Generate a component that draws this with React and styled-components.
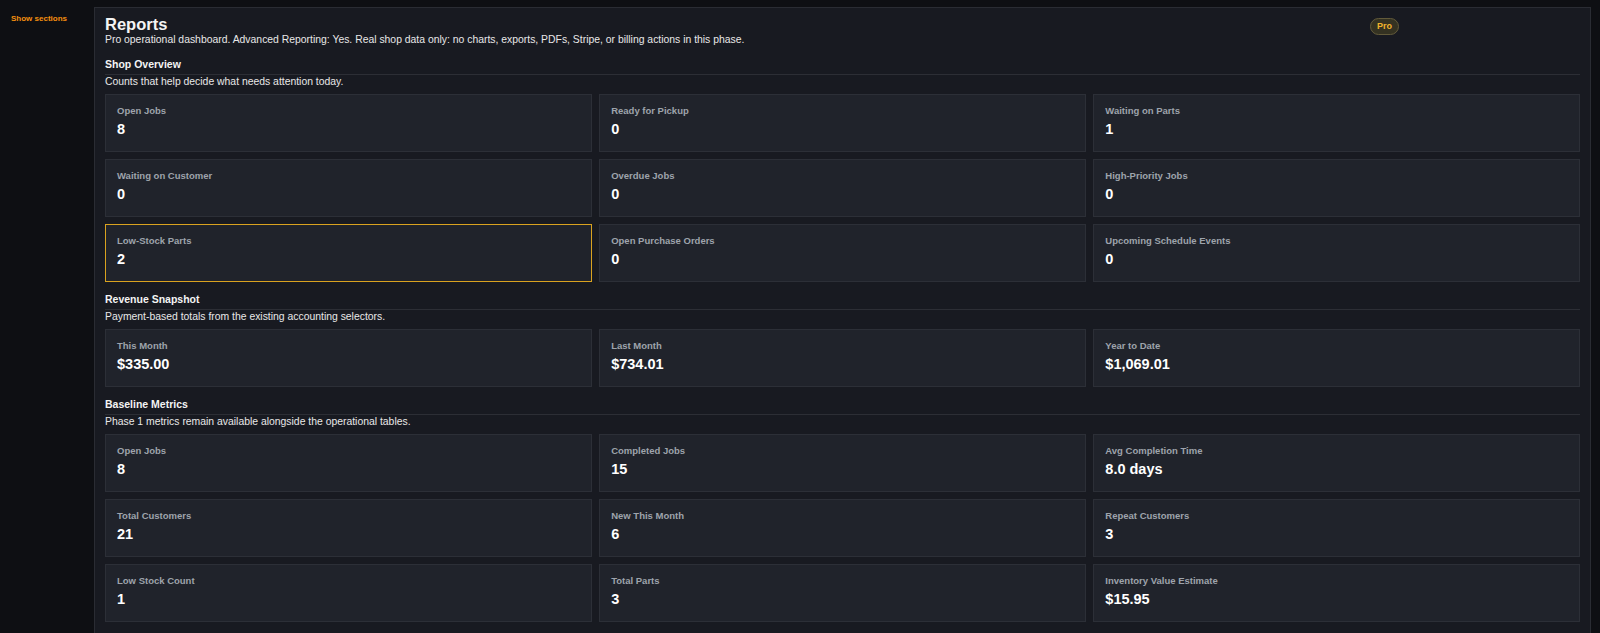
import React from "react";
import styled, { createGlobalStyle } from "styled-components";

const Global = createGlobalStyle`
  html, body { margin: 0; padding: 0; background: #0e0f13; }
  body { font-family: "Liberation Sans", Arial, sans-serif; color: #e6e6e6; }
  * { box-sizing: border-box; }
`;

const Shell = styled.div`
  display: flex;
  align-items: flex-start;
  min-height: 633px;
  padding: 7px 9px 0 0;
`;

const Sidebar = styled.aside`
  width: 94px;
  flex: none;
  padding: 0 0 0 11px;
`;

const SidebarToggle = styled.button`
  background: none;
  border: none;
  padding: 0;
  font: bold 8px/11px "Liberation Sans", Arial, sans-serif;
  color: #f5900f;
  cursor: pointer;
`;

const Panel = styled.main`
  flex: 1;
  background: #181a21;
  border: 1px solid #2a2c33;
  border-bottom: none;
  padding: 8px 10px 20px;
  min-height: 640px;
`;

const Header = styled.header`
  display: flex;
  justify-content: space-between;
  align-items: flex-start;
  max-width: 1294px;
`;

const Title = styled.h1`
  margin: 0;
  font: bold 16.5px/17px "Liberation Sans", Arial, sans-serif;
  color: #f4f4f4;
`;

const Subtitle = styled.p`
  margin: 0 0 2px;
  font: 10.4px/13px "Liberation Sans", Arial, sans-serif;
  color: #e8e8e8;
`;

const Badge = styled.span`
  margin-top: 2px;
  display: inline-flex;
  align-items: center;
  justify-content: center;
  height: 17px;
  padding: 0 6px;
  border-radius: 9px;
  background: #343222;
  border: 1px solid #625a3a;
  color: #f0b52c;
  font: bold 9px/1 "Liberation Sans", Arial, sans-serif;
`;

const Section = styled.section`
  margin-top: ${(p) => p.$top}px;
`;

const SectionTitle = styled.h2`
  margin: 0;
  padding-bottom: 3px;
  border-bottom: 1px solid #2c2e35;
  font: bold 10.5px/14px "Liberation Sans", Arial, sans-serif;
  color: #f4f4f4;
`;

const SectionDesc = styled.p`
  margin: 0 0 6px;
  font: 10.4px/13px "Liberation Sans", Arial, sans-serif;
  color: #e8e8e8;
`;

const Grid = styled.div`
  display: grid;
  grid-template-columns: repeat(3, 1fr);
  gap: 7px 7.5px;
`;

const Card = styled.div`
  background: #20232b;
  border: 1px solid ${(p) => (p.$alert ? "#d9a21f" : "#2c2f37")};
  padding: 10px 11px 8px;
  height: 58px;
`;

const Label = styled.div`
  font: bold 9.5px/12px "Liberation Sans", Arial, sans-serif;
  color: #9ea3ac;
`;

const Value = styled.div`
  margin-top: 3px;
  font: bold 14.5px/19px "Liberation Sans", Arial, sans-serif;
  color: #ffffff;
`;

const sections = [
  {
    title: "Shop Overview",
    desc: "Counts that help decide what needs attention today.",
    top: 9,
    items: [
      ["Open Jobs", "8"],
      ["Ready for Pickup", "0"],
      ["Waiting on Parts", "1"],
      ["Waiting on Customer", "0"],
      ["Overdue Jobs", "0"],
      ["High-Priority Jobs", "0"],
      ["Low-Stock Parts", "2", true],
      ["Open Purchase Orders", "0"],
      ["Upcoming Schedule Events", "0"],
    ],
  },
  {
    title: "Revenue Snapshot",
    desc: "Payment-based totals from the existing accounting selectors.",
    top: 10,
    items: [
      ["This Month", "$335.00"],
      ["Last Month", "$734.01"],
      ["Year to Date", "$1,069.01"],
    ],
  },
  {
    title: "Baseline Metrics",
    desc: "Phase 1 metrics remain available alongside the operational tables.",
    top: 10,
    items: [
      ["Open Jobs", "8"],
      ["Completed Jobs", "15"],
      ["Avg Completion Time", "8.0 days"],
      ["Total Customers", "21"],
      ["New This Month", "6"],
      ["Repeat Customers", "3"],
      ["Low Stock Count", "1"],
      ["Total Parts", "3"],
      ["Inventory Value Estimate", "$15.95"],
    ],
  },
];

export default function App() {
  return (
    <>
      <Global />
      <Shell>
        <Sidebar>
          <SidebarToggle>Show sections</SidebarToggle>
        </Sidebar>
        <Panel>
          <Header>
            <div>
              <Title>Reports</Title>
              <Subtitle>
                Pro operational dashboard. Advanced Reporting: Yes. Real shop data only: no charts,
                exports, PDFs, Stripe, or billing actions in this phase.
              </Subtitle>
            </div>
            <Badge>Pro</Badge>
          </Header>
          {sections.map((s) => (
            <Section key={s.title} $top={s.top}>
              <SectionTitle>{s.title}</SectionTitle>
              <SectionDesc>{s.desc}</SectionDesc>
              <Grid>
                {s.items.map(([label, value, alert]) => (
                  <Card key={label} $alert={alert}>
                    <Label>{label}</Label>
                    <Value>{value}</Value>
                  </Card>
                ))}
              </Grid>
            </Section>
          ))}
        </Panel>
      </Shell>
    </>
  );
}
